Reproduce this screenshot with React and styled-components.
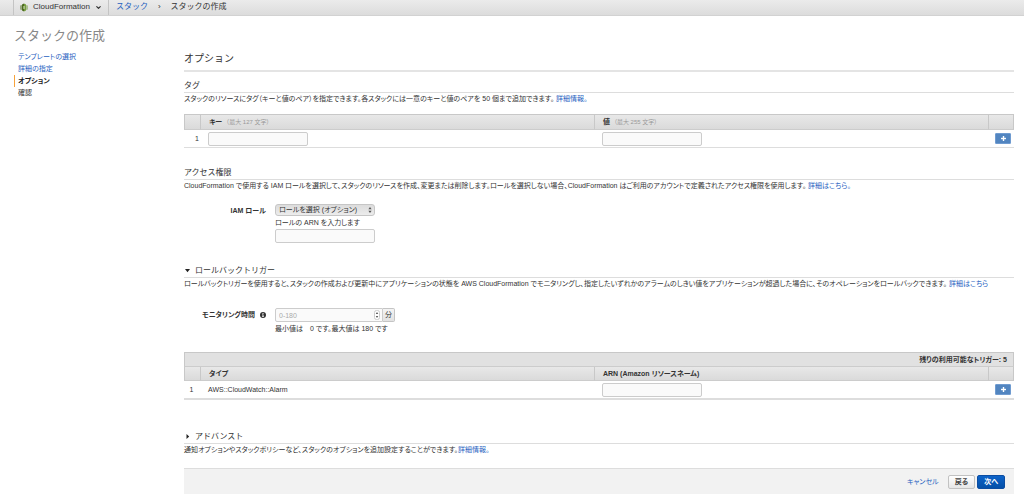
import React from 'react';
import styled, { createGlobalStyle } from 'styled-components';
import { ChevronDown } from 'lucide-react';

const GlobalStyle = createGlobalStyle`
  :root {
    --text: #333;
    --blue: #1f5fbf;
    --fz-sm: 6px;
    --fz-md: 7px;
    --fz-lg: 8px;
    --fz-xl: 10px;
    --fz-xxl: 13px;
  }

  * {
    box-sizing: border-box;
  }

  body {
    margin: 0;
    background: #fff;
    color: var(--text);
    font-family: 'Liberation Sans', 'Noto Sans CJK JP', sans-serif;
    font-size: var(--fz-md);
    line-height: 12px;
    font-feature-settings: 'palt';
  }

  h1,
  h2,
  p,
  ul,
  ol {
    margin: 0;
    padding: 0;
    font-weight: 400;
    list-style: none;
  }

  h1,
  h2,
  header {
    font-feature-settings: normal;
  }

  a {
    color: var(--blue);
    text-decoration: none;
  }

  button,
  input,
  select {
    margin: 0;
    color: inherit;
    font: inherit;
    font-feature-settings: inherit;
  }
`;

const StyledTopBar = styled.header`
  display: flex;
  height: 16px;
  padding-left: 13px;
  border-bottom: 1px solid #d2d2d2;
  background: linear-gradient(#ebebeb, #dcdcdc);
  font-size: var(--fz-lg);
  line-height: 14px;
`;

const StyledService = styled.button`
  display: flex;
  align-items: center;
  gap: 5px;
  padding: 0 6px 1px;
  border: 0;
  border-left: 1px solid #c4c4c4;
  border-right: 1px solid #c4c4c4;
  background: none;
`;

const StyledCrumbs = styled.ol`
  display: flex;
  gap: 10px;
  padding-left: 7px;
`;

const StyledPage = styled.div`
  display: grid;
  grid-template-columns: 170px minmax(0, 1fr);
  padding: 0 10px 0 14px;
`;

const StyledSidebar = styled.aside`
  padding-top: 11px;

  h1 {
    margin-bottom: 6px;
    color: #888;
    font-size: var(--fz-xxl);
    line-height: 18px;
  }
`;

const StyledStep = styled.li`
  padding-left: 3px;
  border-left: 1px solid ${({ $current }) => ($current ? '#f7a23b' : 'transparent')};
  color: ${({ $current }) => ($current ? '#222' : 'inherit')};
  font-weight: ${({ $current }) => ($current ? 700 : 400)};
`;

const StyledMain = styled.main`
  padding-top: 33px;

  > h1 {
    margin-bottom: 7px;
    padding-bottom: 1px;
    border-bottom: 2px solid #e4e4e4;
    font-size: var(--fz-xl);
    line-height: 20px;
  }
`;

const StyledSection = styled.section`
  margin-bottom: ${({ $space }) => $space}px;

  h2 {
    border-bottom: 1px solid #ddd;
    font-size: var(--fz-lg);
    line-height: 13px;
  }
`;

const StyledToggle = styled.button`
  display: flex;
  align-items: center;
  gap: 5px;
  padding: 0 0 0 1px;
  border: 0;
  background: none;
`;

const StyledTable = styled.table`
  width: 100%;
  margin-top: ${({ $top }) => $top}px;
  border-collapse: separate;
  border-spacing: 0;
  table-layout: fixed;

  .index {
    width: 17px;
  }

  .action {
    width: 25px;
  }

  th {
    height: ${({ $head }) => $head}px;
    padding: 0 8px;
    border-right: 1px solid #c8c8c8;
    border-bottom: 1px solid #ccc;
    background: linear-gradient(#e8e8e8, #dadada);
    text-align: left;
  }

  tr:first-child th {
    border-top: 1px solid #c8c8c8;
  }

  th:first-child {
    border-left: 1px solid #c8c8c8;
  }

  th:first-child:not(.summary) {
    padding: 0;
  }

  th.summary {
    height: 15px;
    padding-right: 6px;
    background: #e1e1e1;
    text-align: right;
  }

  td {
    height: ${({ $row }) => $row}px;
    padding: 0 7px;
    border-bottom: ${({ $line }) => $line}px solid #ddd;
  }

  td:first-child {
    padding: 0 2px 0 0;
    text-align: ${({ $index }) => $index};
  }

  td:last-child {
    padding: 0 3px 0 0;
    text-align: right;
  }
`;

const StyledLimit = styled.small`
  margin-left: 2px;
  color: #999;
  font-size: var(--fz-sm);
  font-weight: 400;
`;

const StyledInput = styled.input`
  display: block;
  width: ${({ $wide }) => ($wide ? 108 : 100)}px;
  height: 14px;
  padding: 0 3px;
  border: 1px solid #ccc;
  border-radius: ${({ $wide }) => ($wide ? '2px 0 0 2px' : '2px')};
  background: #fafafa;
  appearance: textfield;

  &::placeholder {
    color: #aaa;
  }
`;

const StyledAdd = styled.button`
  display: inline-flex;
  align-items: center;
  justify-content: center;
  width: 16px;
  height: 11px;
  padding: 0;
  border: 1px solid #6f9bd0;
  border-radius: 1px;
  background: #5285c0;
  color: #fff;
  vertical-align: middle;
`;

const StyledField = styled.div`
  display: grid;
  grid-template-columns: 82px minmax(0, 1fr);
  column-gap: 9px;
  margin-top: ${({ $top }) => $top}px;
`;

const StyledLabel = styled.div`
  display: flex;
  align-items: center;
  justify-content: flex-end;
  gap: 5px;
  height: 14px;
  font-weight: 700;
`;

const StyledHint = styled.label`
  display: block;
  margin: 1px 0 0;
`;

/* The control and its arrows share one grid cell */
const StyledStack = styled.div`
  display: inline-grid;
  align-items: center;

  > * {
    grid-area: 1 / 1;
  }

  svg {
    justify-self: end;
    margin-right: 3px;
    pointer-events: none;
  }
`;

const StyledSelect = styled.select`
  width: 100px;
  height: 12px;
  padding: 0 3px;
  border: 1px solid #c6c6c6;
  border-radius: 3px;
  background: linear-gradient(#dcdcdc, #ececec);
  line-height: 10px;
  appearance: none;
`;

const StyledGroup = styled.div`
  display: flex;
  height: 14px;
`;

const StyledUnit = styled.span`
  width: 12px;
  border: 1px solid #c4c4c4;
  border-left: 0;
  border-radius: 0 2px 2px 0;
  background: linear-gradient(#f4f4f4, #e2e2e2);
  text-align: center;
`;

const StyledFooter = styled.footer`
  display: flex;
  align-items: center;
  justify-content: flex-end;
  gap: 2px;
  padding: 6px 9px 5px;
  border-top: 1px solid #ddd;
  background: #f2f2f2;

  a {
    margin-right: 7px;
  }
`;

const StyledButton = styled.button`
  height: 14px;
  min-width: 26px;
  padding: 0 6px;
  border: 1px solid ${({ $primary }) => ($primary ? '#0c4da2' : '#c2c2c2')};
  border-radius: 2px;
  background: ${({ $primary }) =>
    $primary ? 'linear-gradient(#0d63c9, #0450a8)' : 'linear-gradient(#fff, #e6e6e6)'};
  color: ${({ $primary }) => ($primary ? '#fff' : '#444')};
  font-weight: 700;
  line-height: 12px;
`;

const ServiceIcon = () => (
  <svg width="8" height="9" viewBox="0 0 16 18" aria-hidden="true">
    <path d="M1 5l2-1v10l-2-1zM4 3l4-2v16l-4-2z" fill="#4c6b1f" />
    <path d="M8 1l4 2v12l-4 2zM13 4l2 1v8l-2 1z" fill="#759c3e" />
    <path d="M6 6h1v6H6zM9 6h1v6H9z" fill="#dbe6c8" />
  </svg>
);

const Caret = ({ open }) => (
  <svg width="5" height="5" viewBox="0 0 5 5" aria-hidden="true">
    <path d={open ? 'M0 1h5L2.5 4.2z' : 'M1.5 0v5L4.2 2.5z'} fill="#222" />
  </svg>
);

const Arrows = () => (
  <svg width="4" height="8" viewBox="0 0 4 8" aria-hidden="true">
    <path d="M2 1l1.6 2.3H.4zM2 7L.4 4.7h3.2z" fill="#555" />
  </svg>
);

const Spinner = () => (
  <svg width="6" height="10" viewBox="0 0 6 10" aria-hidden="true">
    <rect x=".5" y=".5" width="5" height="9" rx="2" fill="#fff" stroke="#ccc" />
    <path d="M3 2l1.2 2H1.8zM3 8L1.8 6h2.4z" fill="#555" />
  </svg>
);

const InfoIcon = () => (
  <svg width="6" height="6" viewBox="0 0 12 12" aria-hidden="true">
    <circle cx="6" cy="6" r="6" fill="#333" />
    <path d="M5 2h2v2H5zM4 5h3v4h1v1H4V9h1V6H4z" fill="#fff" />
  </svg>
);

const AddButton = () => (
  <StyledAdd type="button" aria-label="追加">
    <svg width="5" height="5" viewBox="0 0 5 5" aria-hidden="true">
      <path d="M2 0h1v2h2v1H3v2H2V3H0V2h2z" fill="currentColor" stroke="currentColor" strokeWidth=".4" />
    </svg>
  </StyledAdd>
);

const steps = ['テンプレートの選択', '詳細の指定', 'オプション', '確認'];

const App = () => (
  <>
    <GlobalStyle />

    <StyledTopBar>
      <StyledService type="button">
        <ServiceIcon />
        CloudFormation
        <ChevronDown size={7} strokeWidth={4} />
      </StyledService>
      <StyledCrumbs>
        <li>
          <a href="#stacks">スタック</a>
        </li>
        <li aria-hidden="true">›</li>
        <li>スタックの作成</li>
      </StyledCrumbs>
    </StyledTopBar>

    <StyledPage>
      <StyledSidebar>
        <h1>スタックの作成</h1>
        <ol>
          {steps.map((step, i) => (
            <StyledStep key={step} $current={i === 2}>
              {i < 2 ? <a href={`#step-${i + 1}`}>{step}</a> : step}
            </StyledStep>
          ))}
        </ol>
      </StyledSidebar>

      <StyledMain>
        <h1>オプション</h1>

        <StyledSection $space={18}>
          <h2>タグ</h2>
          <p>
            スタックのリソースにタグ（キーと値のペア）を指定できます。各スタックには一意のキーと値のペアを
            50 個まで追加できます。 <a href="#tags">詳細情報。</a>
          </p>
          <StyledTable $top={9} $head={16} $row={18} $line={1} $index="right">
            <colgroup>
              <col className="index" />
              <col />
              <col />
              <col className="action" />
            </colgroup>
            <thead>
              <tr>
                <th />
                <th>
                  キー <StyledLimit>（最大 127 文字）</StyledLimit>
                </th>
                <th>
                  値 <StyledLimit>（最大 255 文字）</StyledLimit>
                </th>
                <th />
              </tr>
            </thead>
            <tbody>
              <tr>
                <td>1</td>
                <td>
                  <StyledInput type="text" aria-label="キー" />
                </td>
                <td>
                  <StyledInput type="text" aria-label="値" />
                </td>
                <td>
                  <AddButton />
                </td>
              </tr>
            </tbody>
          </StyledTable>
        </StyledSection>

        <StyledSection $space={21}>
          <h2>アクセス権限</h2>
          <p>
            CloudFormation で使用する IAM
            ロールを選択して、スタックのリソースを作成、変更または削除します。ロールを選択しない場合、CloudFormation
            はご利用のアカウントで定義されたアクセス権限を使用します。{' '}
            <a href="#permissions">詳細はこちら。</a>
          </p>
          <StyledField $top={12}>
            <StyledLabel>
              <label htmlFor="role">IAM ロール</label>
            </StyledLabel>
            <div>
              <StyledStack>
                <StyledSelect id="role">
                  <option>ロールを選択 (オプション)</option>
                </StyledSelect>
                <Arrows />
              </StyledStack>
              <StyledHint htmlFor="role-arn">ロールの ARN を入力します</StyledHint>
              <StyledInput id="role-arn" type="text" />
            </div>
          </StyledField>
        </StyledSection>

        <StyledSection $space={30}>
          <h2>
            <StyledToggle type="button" aria-expanded="true">
              <Caret open />
              ロールバックトリガー
            </StyledToggle>
          </h2>
          <p>
            ロールバックトリガーを使用すると、スタックの作成および更新中にアプリケーションの状態を AWS
            CloudFormation
            でモニタリングし、指定したいずれかのアラームのしきい値をアプリケーションが超過した場合に、そのオペレーションをロールバックできます。{' '}
            <a href="#rollback">詳細はこちら</a>
          </p>
          <StyledField $top={18}>
            <StyledLabel>
              <label htmlFor="minutes">モニタリング時間</label>
              <InfoIcon />
            </StyledLabel>
            <div>
              <StyledGroup>
                <StyledStack>
                  <StyledInput id="minutes" type="number" placeholder="0-180" $wide />
                  <Spinner />
                </StyledStack>
                <StyledUnit>分</StyledUnit>
              </StyledGroup>
              <StyledHint htmlFor="minutes">最小値は　0 です。最大値は 180 です</StyledHint>
            </div>
          </StyledField>
          <StyledTable $top={17} $head={14} $row={19} $line={2} $index="center">
            <colgroup>
              <col className="index" />
              <col />
              <col />
              <col className="action" />
            </colgroup>
            <thead>
              <tr>
                <th className="summary" colSpan={4}>
                  残りの利用可能なトリガー: 5
                </th>
              </tr>
              <tr>
                <th />
                <th>タイプ</th>
                <th>ARN (Amazon リソースネーム)</th>
                <th />
              </tr>
            </thead>
            <tbody>
              <tr>
                <td>1</td>
                <td>AWS::CloudWatch::Alarm</td>
                <td>
                  <StyledInput type="text" aria-label="ARN" />
                </td>
                <td>
                  <AddButton />
                </td>
              </tr>
            </tbody>
          </StyledTable>
        </StyledSection>

        <StyledSection $space={12}>
          <h2>
            <StyledToggle type="button" aria-expanded="false">
              <Caret />
              アドバンスト
            </StyledToggle>
          </h2>
          <p>
            通知オプションやスタックポリシーなど、スタックのオプションを追加設定することができます。
            <a href="#advanced">詳細情報。</a>
          </p>
        </StyledSection>

        <StyledFooter>
          <a href="#cancel">キャンセル</a>
          <StyledButton type="button">戻る</StyledButton>
          <StyledButton type="button" $primary>
            次へ
          </StyledButton>
        </StyledFooter>
      </StyledMain>
    </StyledPage>
  </>
);

export default App;
